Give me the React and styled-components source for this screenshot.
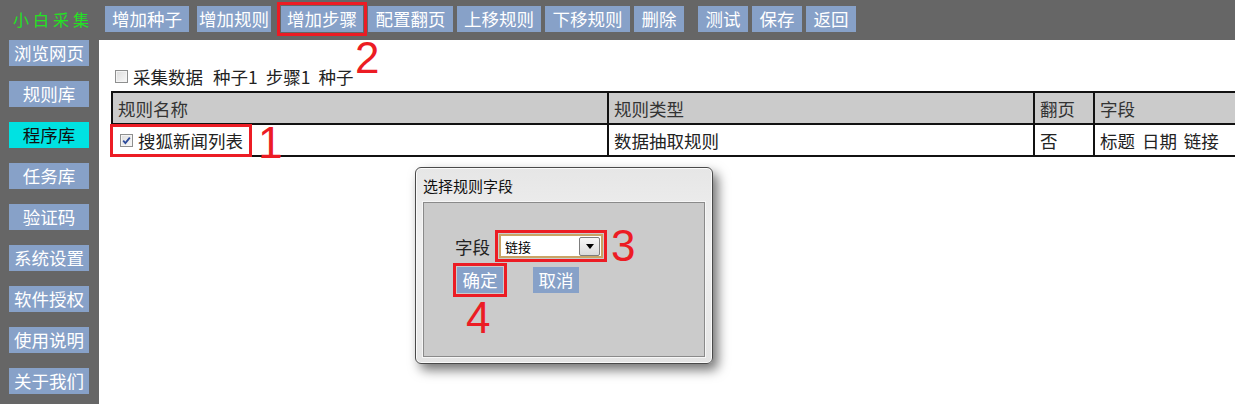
import React from 'react';
import styled, { createGlobalStyle } from 'styled-components';

const GlobalStyle = createGlobalStyle`
  html, body {
    margin: 0;
    padding: 0;
    background: #666666;
    overflow: hidden;
  }
  body {
    font-family: "Noto Sans CJK SC", "Liberation Sans", sans-serif;
  }
`;

const Page = styled.div`
  position: relative;
  width: 1235px;
  height: 404px;
  display: grid;
  grid-template-columns: 99px 1fr;
  grid-template-rows: 40px 1fr;
  background: #666666;
  overflow: hidden;
`;

const TopBar = styled.div`
  grid-column: 1 / 3;
  display: flex;
  align-items: flex-start;
  padding: 6px 0 0 13px;
`;

const Brand = styled.div`
  width: 92px;
  height: 26px;
  line-height: 26px;
  color: #22e322;
  font-size: 16px;
  letter-spacing: 4px;
  white-space: nowrap;
`;

const ToolButton = styled.div`
  width: ${({ w }) => w}px;
  margin-left: ${({ ml }) => ml || 0}px;
  height: 26px;
  line-height: 26px;
  background: #87a1c8;
  color: #ffffff;
  font-size: 17.5px;
  text-align: center;
  white-space: nowrap;
  flex-shrink: 0;
  outline: ${({ marked }) => (marked ? '3px solid #ec1c24' : 'none')};
  outline-offset: 1px;
`;

const ToolGroup = styled.div`
  display: flex;
  gap: 4px;
`;

const Sidebar = styled.div`
  display: flex;
  flex-direction: column;
  gap: 15px;
  padding-left: 9px;
`;

const SideButton = styled.div`
  width: 80px;
  height: 26px;
  line-height: 26px;
  background: ${({ active }) => (active ? '#00e2e2' : '#87a1c8')};
  color: ${({ active }) => (active ? '#111111' : '#ffffff')};
  font-size: 17.5px;
  text-align: center;
  white-space: nowrap;
`;

const Content = styled.div`
  position: relative;
  background: #ffffff;
  padding: 24px 0 0 12px;
  overflow: hidden;
`;

const InfoRow = styled.div`
  display: flex;
  align-items: center;
  height: 24px;
  padding-left: 4px;
  color: #222222;
  font-size: 17.5px;
  gap: 8px;
  margin-bottom: 3px;
`;

const CheckLabel = styled.span`
  display: inline-flex;
  align-items: center;
  gap: 5px;
  margin-right: 2px;
`;

const Box = styled.span`
  display: inline-flex;
  align-items: center;
  justify-content: center;
  width: 11px;
  height: 11px;
  border: 1px solid #8e8f8f;
  background: linear-gradient(135deg, #dcdcdc, #f8f8f8);
  box-shadow: inset 0 0 0 1px #f4f4f4;
`;

const Table = styled.table`
  border-collapse: collapse;
  table-layout: fixed;
  width: 1190px;
  font-size: 17.5px;
  color: #222222;
`;

const Th = styled.th`
  width: ${({ w }) => w}px;
  height: 30px;
  padding: 0 0 0 5px;
  text-align: left;
  font-weight: normal;
  background: #cbcbcb;
  border: 2px solid #111111;
  color: #333333;
  white-space: nowrap;
`;

const Td = styled.td`
  height: 30px;
  padding: 0 0 0 ${({ pl }) => (pl === undefined ? 5 : pl)}px;
  border: 2px solid #111111;
  white-space: nowrap;
  word-spacing: 3px;
`;

const Marked = styled.span`
  display: inline-flex;
  align-items: center;
  gap: 5px;
  height: 27px;
  padding: 0 6px 0 7px;
  outline: 3px solid #ec1c24;
  position: relative;
  top: -1px;
`;

const Dialog = styled.div`
  position: absolute;
  left: 316px;
  top: 127px;
  width: 298px;
  height: 197px;
  border: 1px solid #4a4a4a;
  border-radius: 6px;
  background: linear-gradient(180deg, #e6e6e6 0%, #f1f1f1 40%, #e4e4e4 100%);
  box-shadow: 5px 6px 12px rgba(0, 0, 0, 0.55), inset 0 0 0 1px #fafafa;
  display: flex;
  flex-direction: column;
  padding: 0 7px 6px 7px;
  box-sizing: border-box;
`;

const DialogTitle = styled.div`
  height: 34px;
  line-height: 36px;
  font-size: 15px;
  color: #111111;
  flex-shrink: 0;
`;

const DialogBody = styled.div`
  flex: 1;
  background: #cbcbcb;
  border: 1px solid #8a8a8a;
  box-shadow: 0 0 0 1px #f6f6f6;
  padding: 30px 0 0 31px;
`;

const FieldRow = styled.div`
  display: flex;
  align-items: center;
  gap: 9px;
  font-size: 17.5px;
  color: #222222;
  height: 26px;
`;

const FakeSelect = styled.div`
  display: flex;
  align-items: center;
  justify-content: space-between;
  width: 95px;
  height: 20px;
  padding: 0 1px 0 4px;
  background: #ffffff;
  border: 2px solid #c9a465;
  font-size: 13px;
  color: #000000;
  outline: 3px solid #ec1c24;
  outline-offset: 1px;
`;

const DropButton = styled.span`
  display: flex;
  align-items: center;
  justify-content: center;
  width: 19px;
  height: 17px;
  border: 1px solid #7d7d7d;
  border-radius: 2px;
  background: linear-gradient(180deg, #f7f7f7, #dadada);
`;

const ButtonRow = styled.div`
  display: flex;
  gap: 30px;
  margin: 8px 0 0 2px;
`;

const DialogButton = styled.div`
  width: 46px;
  height: 26px;
  line-height: 26px;
  background: #87a1c8;
  color: #ffffff;
  font-size: 17.5px;
  text-align: center;
  outline: ${({ marked }) => (marked ? '3px solid #ec1c24' : 'none')};
  outline-offset: 1px;
`;

const StepNumber = styled.span`
  position: absolute;
  left: ${({ x }) => x}px;
  top: ${({ y }) => y}px;
  font-family: "Liberation Sans", Arial, sans-serif;
  font-size: 44px;
  line-height: 1;
  color: #ec1c24;
  pointer-events: none;
`;

const CheckMark = () => (
  <svg width="9" height="9" viewBox="0 0 9 9">
    <path d="M1.2 4.6 L3.4 7 L7.8 1.6" fill="none" stroke="#2b4a9a" strokeWidth="1.8" />
  </svg>
);

const tools = [
  { label: '增加种子', w: 84 },
  { label: '增加规则', w: 74, ml: 4 },
  { label: '增加步骤', w: 82, ml: 6, marked: true },
  { label: '配置翻页', w: 85, ml: 1 },
  { label: '上移规则', w: 84 },
  { label: '下移规则', w: 85 },
  { label: '删除', w: 50 },
  { label: '测试', w: 50, ml: 10 },
  { label: '保存', w: 50 },
  { label: '返回', w: 50 },
];

const menu = ['浏览网页', '规则库', '程序库', '任务库', '验证码', '系统设置', '软件授权', '使用说明', '关于我们'];

export default function App() {
  return (
    <>
      <GlobalStyle />
      <Page>
        <TopBar>
          <Brand>小白采集</Brand>
          <ToolGroup>
            {tools.map((t) => (
              <ToolButton key={t.label} w={t.w} ml={t.ml} marked={t.marked}>
                {t.label}
              </ToolButton>
            ))}
          </ToolGroup>
        </TopBar>

        <Sidebar>
          {menu.map((m) => (
            <SideButton key={m} active={m === '程序库'}>
              {m}
            </SideButton>
          ))}
        </Sidebar>

        <Content>
          <InfoRow>
            <CheckLabel>
              <Box />
              采集数据
            </CheckLabel>
            <span>种子1</span>
            <span>步骤1</span>
            <span>种子</span>
          </InfoRow>

          <Table>
            <thead>
              <tr>
                <Th w={489}>规则名称</Th>
                <Th w={419}>规则类型</Th>
                <Th w={53}>翻页</Th>
                <Th w={215}>字段</Th>
              </tr>
            </thead>
            <tbody>
              <tr>
                <Td pl={0}>
                  <Marked>
                    <Box>
                      <CheckMark />
                    </Box>
                    搜狐新闻列表
                  </Marked>
                </Td>
                <Td>数据抽取规则</Td>
                <Td>否</Td>
                <Td>标题 日期 链接</Td>
              </tr>
            </tbody>
          </Table>

          <Dialog>
            <DialogTitle>选择规则字段</DialogTitle>
            <DialogBody>
              <FieldRow>
                <span>字段</span>
                <FakeSelect>
                  <span>链接</span>
                  <DropButton>
                    <svg width="8" height="5" viewBox="0 0 8 5">
                      <path d="M0 0 H8 L4 5 Z" fill="#000" />
                    </svg>
                  </DropButton>
                </FakeSelect>
              </FieldRow>
              <ButtonRow>
                <DialogButton marked>确定</DialogButton>
                <DialogButton>取消</DialogButton>
              </ButtonRow>
            </DialogBody>
          </Dialog>
        </Content>

        <StepNumber x={258} y={121}>1</StepNumber>
        <StepNumber x={355} y={36}>2</StepNumber>
        <StepNumber x={611} y={224}>3</StepNumber>
        <StepNumber x={466} y={296}>4</StepNumber>
      </Page>
    </>
  );
}
